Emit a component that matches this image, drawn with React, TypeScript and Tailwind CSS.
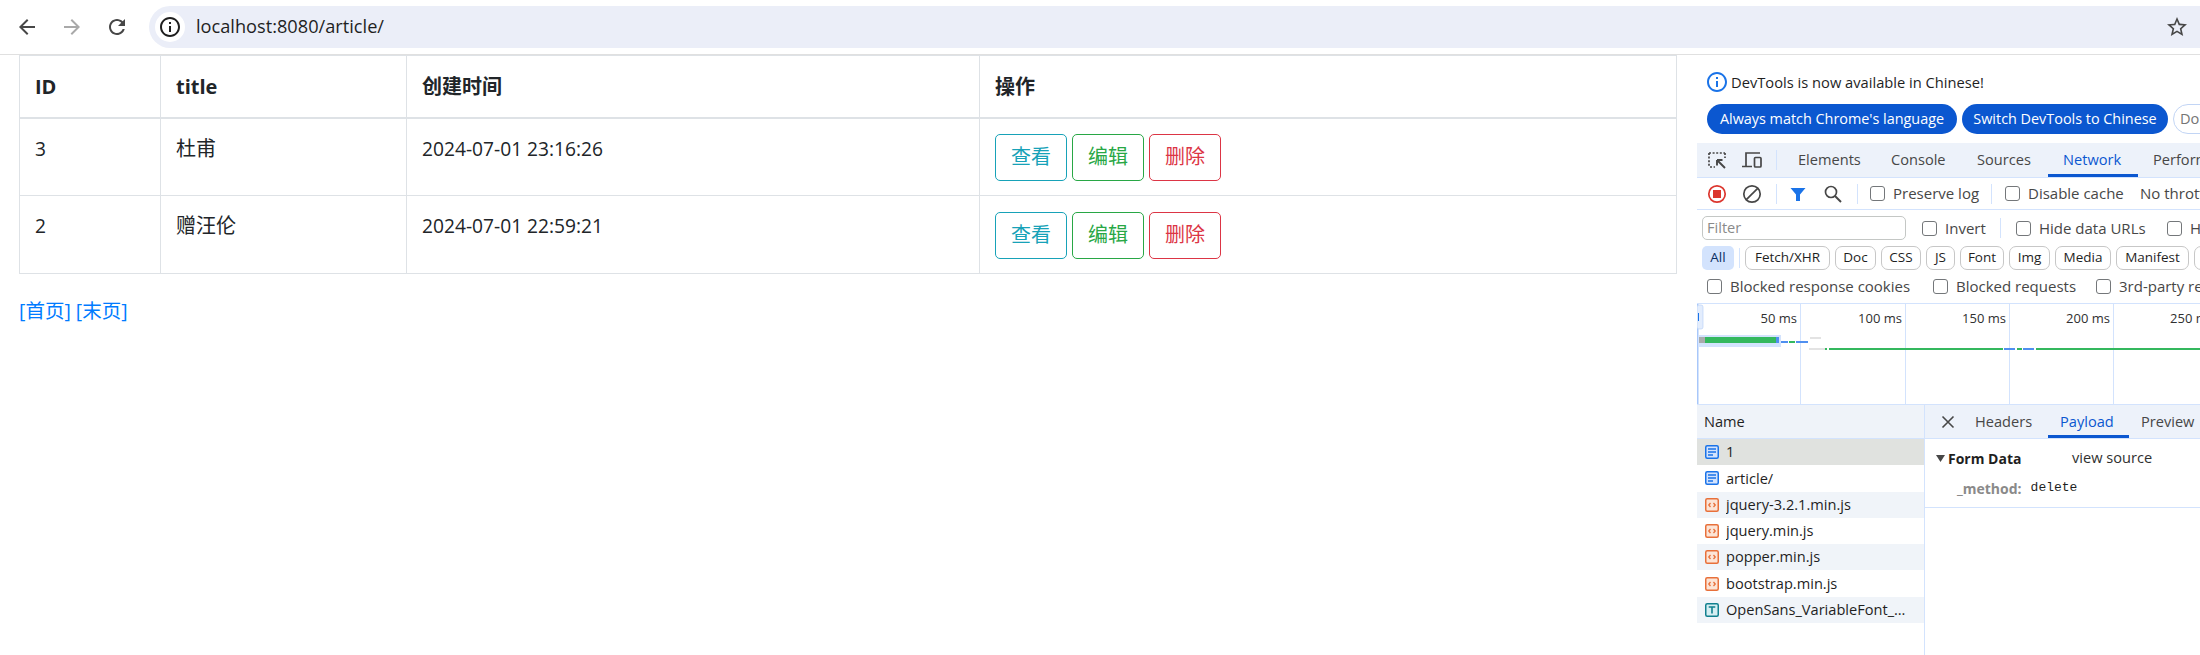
const SANS = "font-['Open_Sans','Noto_Sans_CJK_SC',sans-serif]";

const ROWS = [
  { id: 3, title: '杜甫', created: '2024-07-01 23:16:26' },
  { id: 2, title: '赠汪伦', created: '2024-07-01 22:59:21' },
];

const FILTERS = [
  { label: 'Fetch/XHR', width: 'w-[85px]' },
  { label: 'Doc', width: 'w-[41px]' },
  { label: 'CSS', width: 'w-[40px]' },
  { label: 'JS', width: 'w-[29px]' },
  { label: 'Font', width: 'w-[44px]' },
  { label: 'Img', width: 'w-[41px]' },
  { label: 'Media', width: 'w-[56px]' },
  { label: 'Manifest', width: 'w-[73px]' },
  { label: 'WS', width: 'w-[40px]' },
];

const FILES = [
  { name: '1', type: 'doc', bg: 'bg-[#e0e2df]' },
  { name: 'article/', type: 'doc', bg: 'bg-white' },
  { name: 'jquery-3.2.1.min.js', type: 'js', bg: 'bg-[#f0f4f9]' },
  { name: 'jquery.min.js', type: 'js', bg: 'bg-white' },
  { name: 'popper.min.js', type: 'js', bg: 'bg-[#f0f4f9]' },
  { name: 'bootstrap.min.js', type: 'js', bg: 'bg-white' },
  { name: 'OpenSans_VariableFont_wdth,wght.ttf', type: 'font', bg: 'bg-[#f0f4f9]' },
];

function MaterialIcon({ d, className }: { d: string; className: string }) {
  return (
    <svg viewBox="0 0 24 24" className={className} fill="currentColor">
      <path d={d} />
    </svg>
  );
}

function FileIcon({ type }: { type: string }) {
  if (type === 'doc') {
    return (
      <svg viewBox="0 0 14 14" className="w-[14px] h-[14px] shrink-0" fill="none">
        <rect x="0.75" y="0.75" width="12.5" height="12.5" rx="1.5" fill="#d3e3fd" stroke="#1a73e8" strokeWidth="1.5" />
        <path d="M3 4h8M3 7h8M3 10h5" stroke="#1a73e8" strokeWidth="1.4" />
      </svg>
    );
  }
  if (type === 'js') {
    return (
      <svg viewBox="0 0 14 14" className="w-[14px] h-[14px] shrink-0" fill="none">
        <rect x="0.75" y="0.75" width="12.5" height="12.5" rx="1.5" fill="#fce4d6" stroke="#e8703a" strokeWidth="1.5" />
        <path d="M5.5 5L3.8 7l1.7 2M8.5 5l1.7 2-1.7 2" stroke="#e8703a" strokeWidth="1.3" />
      </svg>
    );
  }
  return (
    <svg viewBox="0 0 14 14" className="w-[14px] h-[14px] shrink-0" fill="none">
      <rect x="0.75" y="0.75" width="12.5" height="12.5" rx="1.5" fill="#d6eef2" stroke="#12808f" strokeWidth="1.5" />
      <path d="M3.7 4h6.6M7 4v6.5" stroke="#12808f" strokeWidth="1.6" />
    </svg>
  );
}

function Check({ label, className }: { label: string; className: string }) {
  return (
    <div className={`flex items-center shrink-0 ${className}`}>
      <div className="w-[15px] h-[15px] rounded-[3px] border-[1.5px] border-[#74777a] bg-white shrink-0" />
      <span className="ml-2 text-[15px] text-[#474747]">{label}</span>
    </div>
  );
}

function Sep({ className }: { className: string }) {
  return <div className={`w-px h-[20px] bg-[#d3e3fd] shrink-0 ${className}`} />;
}

function ActionButton({ label, className }: { label: string; className: string }) {
  return (
    <button className={`w-[72px] h-[47px] rounded-[5px] border bg-white text-[20px] leading-[30px] ${className}`}>
      {label}
    </button>
  );
}

function ArticleTable() {
  return (
    <table className="w-[1658px] ml-[19px] table-fixed border-collapse text-[#212529] text-[19.2px]">
      <colgroup>
        <col className="w-[141px]" />
        <col className="w-[246px]" />
        <col className="w-[573px]" />
        <col />
      </colgroup>
      <thead>
        <tr className="h-[62px] border-b-2 border-[#dee2e6]">
          {['ID', 'title', '创建时间', '操作'].map((h) => (
            <th key={h} className="border border-[#dee2e6] px-[15px] pt-[2px] text-left text-[20px] font-bold border-b-2">
              {h}
            </th>
          ))}
        </tr>
      </thead>
      <tbody>
        {ROWS.map((r) => (
          <tr key={r.id} className="h-[78px]">
            <td className="border border-[#dee2e6] px-[15px] pt-[15px] align-top leading-[30px]">{r.id}</td>
            <td className="border border-[#dee2e6] px-[15px] pt-[15px] align-top leading-[30px] text-[20px]">{r.title}</td>
            <td className="border border-[#dee2e6] px-[15px] pt-[15px] align-top leading-[30px]">{r.created}</td>
            <td className="border border-[#dee2e6] px-[15px] pt-[1px] align-middle">
              <div className="flex gap-[5px]">
                <ActionButton label="查看" className="border-[#17a2b8] text-[#17a2b8]" />
                <ActionButton label="编辑" className="border-[#28a745] text-[#28a745]" />
                <ActionButton label="删除" className="border-[#dc3545] text-[#dc3545]" />
              </div>
            </td>
          </tr>
        ))}
      </tbody>
    </table>
  );
}

function Timeline() {
  return (
    <div className="relative h-[101px] border-b border-[#d3e3fd] overflow-hidden">
      <div className="flex h-full">
        {['50 ms', '100 ms', '150 ms', '200 ms', '250 ms'].map((t, i) => (
          <div
            key={t}
            className={`h-full shrink-0 text-right pr-[3px] pt-[5px] text-[13px] leading-[18px] text-[#303030] border-r border-[#d3e3fd] ${i === 1 ? 'w-[105px]' : 'w-[104px]'}`}
          >
            {t}
          </div>
        ))}
      </div>
      {/* waterfall overview */}
      <svg className="absolute left-0 top-0 w-[503px] h-[101px]" viewBox="0 0 503 101">
        <rect x="0" y="0" width="1.5" height="101" fill="#a8c7fa" />
        <rect x="0" y="1" width="6" height="24" rx="2" fill="#e3edfd" stroke="#bcd2f7" strokeWidth="0.7" />
        <rect x="1" y="9" width="1" height="8" fill="#1a73e8" />
        <rect x="1" y="31" width="83" height="12" fill="#d3e3fd" />
        <rect x="2" y="33" width="6" height="6" fill="#a9abad" />
        <rect x="8" y="33" width="71" height="6" fill="#34b85e" />
        <rect x="79" y="33" width="3" height="6" fill="#4f8ff0" />
        <rect x="84" y="37" width="7" height="2" fill="#4f8ff0" />
        <rect x="92" y="37" width="6" height="2" fill="#34b85e" />
        <rect x="99" y="37" width="12" height="2" fill="#4f8ff0" />
        <rect x="113" y="33" width="11" height="2" fill="#e3e3e3" />
        <rect x="112" y="44" width="16" height="2" fill="#e3e3e3" />
        <rect x="128" y="44" width="2" height="2" fill="#34b85e" />
        <rect x="132" y="44" width="174" height="2" fill="#34b85e" />
        <rect x="307" y="44" width="11" height="2" fill="#4f8ff0" />
        <rect x="320" y="44" width="5" height="2" fill="#34b85e" />
        <rect x="326" y="44" width="11" height="2" fill="#4f8ff0" />
        <rect x="339" y="44" width="164" height="2" fill="#34b85e" />
      </svg>
    </div>
  );
}

function DevTools() {
  return (
    <div className="w-[503px] shrink-0 overflow-hidden text-[14.6px] text-[#1f1f1f] whitespace-nowrap flex flex-col h-[600px]">
      <div className="h-[88px] shrink-0 pl-[10px] pt-[15px]">
        <div className="flex items-center h-[24px]">
          <MaterialIcon
            className="w-[24px] h-[24px] text-[#1a73e8] -ml-[2px]"
            d="M11 7h2v2h-2zm0 4h2v6h-2zm1-9C6.48 2 2 6.48 2 12s4.48 10 10 10 10-4.48 10-10S17.52 2 12 2zm0 18c-4.41 0-8-3.59-8-8s3.59-8 8-8 8 3.59 8 8-3.59 8-8 8z"
          />
          <span className="ml-[2px] text-[14.7px]">DevTools is now available in Chinese!</span>
        </div>
        <div className="flex items-center gap-[5px] mt-[10px]">
          <div className="w-[250px] shrink-0 h-[30px] rounded-full bg-[#0b57d0] text-white flex items-center justify-center text-[14.4px]">
            Always match Chrome's language
          </div>
          <div className="w-[206px] shrink-0 h-[30px] rounded-full bg-[#0b57d0] text-white flex items-center justify-center text-[14.4px]">
            Switch DevTools to Chinese
          </div>
          <div className="w-[120px] h-[30px] rounded-full border border-[#c2d5f5] bg-white text-[#757575] flex items-center pl-[6px] shrink-0">
            Don't show again
          </div>
        </div>
      </div>

      {/* main tab strip */}
      <div className="h-[35px] shrink-0 bg-[#edf2fa] border-b border-[#d3e3fd] flex items-stretch">
        <div className="w-[79px] shrink-0 flex items-center pl-[10px] gap-[15px] text-[#474747]">
          <svg viewBox="0 0 20 20" className="w-[20px] h-[20px]" fill="none" stroke="currentColor" strokeWidth="1.7">
            <path d="M2 3h16M2 3v13" strokeDasharray="2 1.6" />
            <path d="M3 17h5M18 3v5" strokeDasharray="2 1.6" />
            <path d="M10 10l8 8M10 10h5.5M10 10v5.5" strokeWidth="1.9" />
          </svg>
          <svg viewBox="0 0 20 20" className="w-[20px] h-[20px]" fill="none" stroke="currentColor" strokeWidth="1.7">
            <path d="M4 16V3h14M0 16.5h10" />
            <rect x="12.5" y="7.5" width="6.5" height="9.5" rx="1" />
          </svg>
        </div>
        <div className="flex items-center"><Sep className="" /></div>
        <div className="ml-[6px] flex text-[#474747]">
          {[
            { t: 'Elements', w: 'w-[93px]' },
            { t: 'Console', w: 'w-[86px]' },
            { t: 'Sources', w: 'w-[86px]' },
          ].map((tab) => (
            <div key={tab.t} className={`${tab.w} pl-[15px] flex items-center`}>{tab.t}</div>
          ))}
          <div className="w-[90px] pl-[15px] flex items-center text-[#0b57d0] border-b-[3px] border-[#0b57d0] pt-[3px]">Network</div>
          <div className="w-[100px] pl-[15px] flex items-center">Performance</div>
        </div>
      </div>

      {/* network toolbar */}
      <div className="h-[32px] shrink-0 border-b border-[#d3e3fd] flex items-center">
        <div className="w-[79px] shrink-0 flex items-center pl-[10px] gap-[15px]">
          <svg viewBox="0 0 20 20" className="w-[20px] h-[20px]" fill="none">
            <circle cx="10" cy="10" r="8.2" stroke="#dc362e" strokeWidth="1.7" />
            <rect x="6" y="6" width="8" height="8" fill="#dc362e" />
          </svg>
          <svg viewBox="0 0 20 20" className="w-[20px] h-[20px] text-[#474747]" fill="none" stroke="currentColor" strokeWidth="1.7">
            <circle cx="10" cy="10" r="8.2" />
            <path d="M4.3 15.7L15.7 4.3" />
          </svg>
        </div>
        <Sep className="" />
        <svg viewBox="0 0 16 16" className="w-[16px] h-[16px] ml-[13px] shrink-0" fill="#1a73e8">
          <path d="M0.5 2h15L10 8.5V15H6V8.5z" />
        </svg>
        <svg viewBox="0 0 20 20" className="w-[20px] h-[20px] ml-[17px] shrink-0 text-[#474747]" fill="none" stroke="currentColor" strokeWidth="1.7">
          <circle cx="8" cy="8" r="5.5" />
          <path d="M12 12l6 6" strokeWidth="2" />
        </svg>
        <Sep className="ml-[14px]" />
        <Check label="Preserve log" className="ml-[12px] w-[121px]" />
        <Sep className="" />
        <Check label="Disable cache" className="ml-[13px] w-[135px]" />
        <span className="text-[15px] text-[#474747]">No throttling</span>
      </div>

      {/* filter row */}
      <div className="h-[35px] shrink-0 flex items-center pt-[1px]">
        <div className="w-[204px] h-[24px] ml-[5px] rounded-[5px] border border-[#c4c7c5] text-[#8a8a8a] flex items-center pl-[4px] shrink-0">Filter</div>
        <Check label="Invert" className="ml-[16px] w-[78px]" />
        <Sep className="" />
        <Check label="Hide data URLs" className="ml-[15px] w-[151px]" />
        <Check label="Hide extension URLs" className="" />
      </div>

      {/* type filters */}
      <div className="h-[25px] shrink-0 flex items-center ml-[5px] gap-[5px] text-[13.5px]">
        <div className="w-[32px] h-[24px] rounded-[5px] bg-[#d3e3fd] text-[#0a2e62] flex items-center justify-center shrink-0">All</div>
        <div className="w-px h-[20px] bg-[#d3e3fd] shrink-0" />
        {FILTERS.map((f) => (
          <div key={f.label} className={`${f.width} h-[24px] rounded-[7px] border border-[#c7c7c7] flex items-center justify-center shrink-0`}>
            {f.label}
          </div>
        ))}
      </div>

      {/* blocked row */}
      <div className="h-[34px] shrink-0 border-b border-[#d3e3fd] flex items-center pl-[10px]">
        <Check label="Blocked response cookies" className="w-[226px]" />
        <Check label="Blocked requests" className="w-[163px]" />
        <Check label="3rd-party requests" className="" />
      </div>

      <Timeline />

      {/* requests + detail */}
      <div className="flex flex-1 min-h-0">
        <div className="w-[228px] shrink-0 border-r border-[#d3e3fd]">
          <div className="h-[34px] bg-[#eff3f9] border-b border-[#d3e3fd] flex items-center pl-[7px]">Name</div>
          {FILES.map((f) => (
            <div key={f.name} className={`h-[26.3px] flex items-center pl-[8px] ${f.bg}`}>
              <FileIcon type={f.type} />
              <span className="ml-[7px] truncate pr-[12px]">{f.name}</span>
            </div>
          ))}
        </div>
        <div className="flex-1 min-w-0">
          <div className="h-[34px] bg-[#edf2fa] border-b border-[#d3e3fd] flex items-stretch text-[#474747]">
            <div className="w-[50px] shrink-0 flex items-center pl-[16px]">
              <svg viewBox="0 0 14 14" className="w-[14px] h-[14px]" fill="none" stroke="#474747" strokeWidth="1.6">
                <path d="M1.5 1.5l11 11M12.5 1.5l-11 11" />
              </svg>
            </div>
            <div className="w-[73px] flex items-center">Headers</div>
            <div className="w-[81px] flex items-center pl-[12px] text-[#0b57d0] border-b-[3px] border-[#0b57d0] pt-[3px]">Payload</div>
            <div className="pl-[12px] flex items-center">Preview</div>
          </div>
          <div className="h-[69px] border-b border-[#d3e3fd] pl-[11px] pt-[7px]">
            <div className="flex items-center h-[24px]">
              <svg viewBox="0 0 9 7" className="w-[9px] h-[7px] shrink-0 text-[#474747]" fill="currentColor">
                <path d="M0 0h9L4.5 7z" />
              </svg>
              <span className="ml-[3px] w-[124px] font-bold text-[14px] text-[#1f1f1f]">Form Data</span>
              <span className="text-[#303030]">view source</span>
            </div>
            <div className="flex items-center h-[24px] mt-[6px] pl-[21px]">
              <span className="font-bold text-[14px] text-[#8a8a8a]">_method:</span>
              <span className="ml-[9px] font-['Liberation_Mono',monospace] text-[13px] text-[#1f1f1f]">delete</span>
            </div>
          </div>
        </div>
      </div>
    </div>
  );
}

export default function App() {
  return (
    <div className={`h-[655px] w-[2200px] overflow-hidden bg-white ${SANS}`}>
      {/* browser toolbar */}
      <div className="h-[55px] border-b border-[#e0e0e0] flex items-center pl-[15px]">
        <MaterialIcon className="w-[24px] h-[24px] text-[#474747]" d="M20 11H7.83l5.59-5.59L12 4l-8 8 8 8 1.41-1.41L7.83 13H20v-2z" />
        <MaterialIcon className="w-[24px] h-[24px] ml-[21px] text-[#a9a9a9]" d="M12 4l-1.41 1.41L16.17 11H4v2h12.17l-5.58 5.59L12 20l8-8z" />
        <MaterialIcon className="w-[24px] h-[24px] ml-[21px] text-[#474747]" d="M17.65 6.35C16.2 4.9 14.21 4 12 4c-4.42 0-7.99 3.58-7.99 8s3.57 8 7.99 8c3.73 0 6.84-2.55 7.73-6h-2.08c-.82 2.33-3.04 4-5.65 4-3.31 0-6-2.69-6-6s2.69-6 6-6c1.66 0 3.14.69 4.22 1.78L13 11h7V4l-2.35 2.35z" />
        <div className="ml-[20px] flex-1 h-[42px] rounded-l-[21px] bg-[#ebeef8] flex items-center pl-[6px] pr-[11px]">
          <div className="w-[30px] h-[30px] rounded-full bg-white flex items-center justify-center">
            <MaterialIcon className="w-[24px] h-[24px] text-[#1f1f1f]" d="M11 7h2v2h-2zm0 4h2v6h-2zm1-9C6.48 2 2 6.48 2 12s4.48 10 10 10 10-4.48 10-10S17.52 2 12 2zm0 18c-4.41 0-8-3.59-8-8s3.59-8 8-8 8 3.59 8 8-3.59 8-8 8z" />
          </div>
          <span className="ml-[11px] text-[18.2px] text-[#1f1f1f]">localhost:8080/article/</span>
          <MaterialIcon className="w-[24px] h-[24px] ml-auto text-[#474747]" d="M22 9.24l-7.19-.62L12 2 9.19 8.63 2 9.24l5.46 4.73L5.82 21 12 17.27 18.18 21l-1.63-7.03L22 9.24zM12 15.4l-3.76 2.27 1-4.28-3.32-2.88 4.38-.38L12 6.1l1.71 4.04 4.38.38-3.32 2.88 1 4.28L12 15.4z" />
        </div>
      </div>

      <div className="flex">
        <div className="w-[1697px] shrink-0">
          <ArticleTable />
          <div className="ml-[19px] mt-[22px] text-[19.5px] leading-[30px] text-[#007bff]">[首页] [末页]</div>
        </div>
        <DevTools />
      </div>
    </div>
  );
}
